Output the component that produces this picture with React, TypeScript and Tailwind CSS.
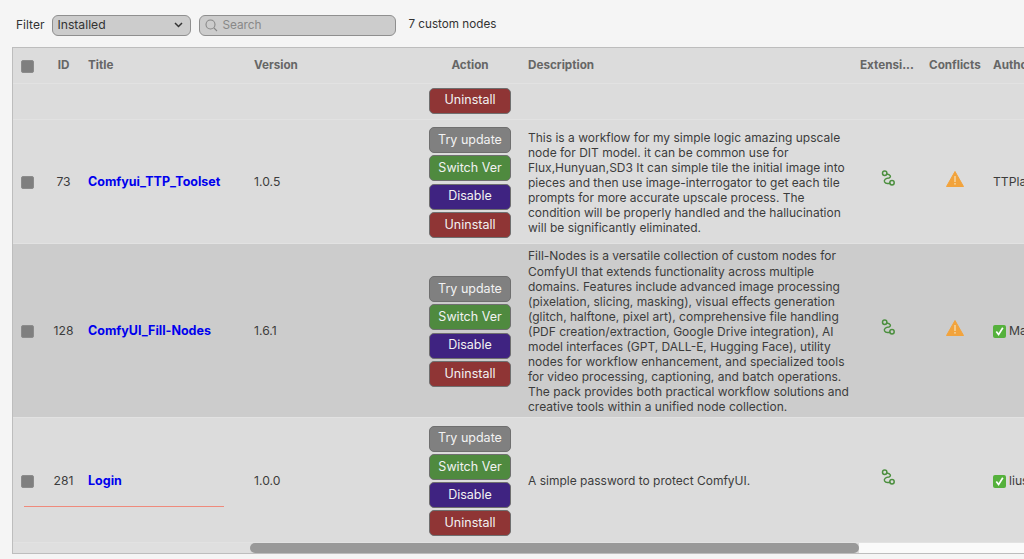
const FONT = "font-['Inter','Noto_Sans',sans-serif]";

function Btn({ label, cls }: { label: string; cls: string }) {
  return (
    <button className={`w-[82px] h-[26px] shrink-0 rounded-[5px] border border-[#6f6f6f] text-[12.5px] leading-none text-[#f2f2f2] ${cls}`}>
      {label}
    </button>
  );
}

function Actions({ only }: { only?: boolean }) {
  return (
    <div className="flex flex-col items-center gap-[2.33px]">
      {!only && <Btn label="Try update" cls="bg-[#808080]" />}
      {!only && <Btn label="Switch Ver" cls="bg-[#4f8a3f]" />}
      {!only && <Btn label="Disable" cls="bg-[#3f2381]" />}
      <Btn label="Uninstall" cls="bg-[#8f3535]" />
    </div>
  );
}

function Check() {
  return <div className="w-[13px] h-[13px] rounded-[2px] bg-[#7f7f7f] border border-[#8c8c8c]" />;
}

function Ext() {
  return (
    <svg className="mb-[8px]" width="15" height="17" viewBox="0 0 15 17" fill="none" stroke="#4c8f3f" strokeWidth="1.5" strokeLinecap="round">
      <circle cx="3.7" cy="3.2" r="2.2" />
      <circle cx="11" cy="12.8" r="2.2" />
      <path d="M5.8 4C9.4 4.4 10.6 7 8 8 4.8 8.3 2.6 9.6 3.6 12c.8 1.7 3 1.8 5.2 1.2" />
    </svg>
  );
}

function Warn() {
  return (
    <svg className="mb-[8px]" width="18" height="16" viewBox="0 0 18 16">
      <path d="M9 .5 17.5 15.5H.5Z" fill="#f2a33c" stroke="#f2a33c" strokeLinejoin="round" />
      <rect x="8.3" y="5" width="1.4" height="6" fill="#f6d9a8" />
      <rect x="8.3" y="12" width="1.4" height="1.6" fill="#f6d9a8" />
    </svg>
  );
}

function Tick() {
  return (
    <span className="inline-flex w-[13px] h-[13px] rounded-[2px] bg-[#55b13c] items-center justify-center mr-[3px] align-[-2px]">
      <svg width="11" height="11" viewBox="0 0 11 11" fill="none" stroke="#ffffff" strokeWidth="1.7"><path d="M2.3 5.6 4.6 8.6 8.8 1.8" /></svg>
    </span>
  );
}

function Row({ h, bg, id, title, version, desc, warn, author, tick }: {
  h: string; bg: string; id: string; title: string; version: string; desc: string; warn?: boolean; author: string; tick?: boolean;
}) {
  return (
    <div className={`flex items-center shrink-0 border-b border-[#e2e2e2] pt-[2px] ${h} ${bg}`}>
      <div className="w-[28px] shrink-0 flex justify-center"><Check /></div>
      <div className="w-[47px] shrink-0 pr-[2px] text-center text-[12.2px] text-[#3c3c3c]">{id}</div>
      <div className="w-[166px] shrink-0 font-bold text-[12.5px] text-[#0000ee]">{title}</div>
      <div className="w-[165px] shrink-0 text-[12.2px] text-[#3c3c3c]">{version}</div>
      <div className="w-[102px] shrink-0 flex justify-center"><Actions /></div>
      <div className="w-[332px] shrink-0 pl-[7px] pr-[1px] text-[#3c3c3c] text-[12px] leading-[15.1px]">{desc}</div>
      <div className="w-[70px] shrink-0 flex justify-center"><Ext /></div>
      <div className="w-[64px] shrink-0 flex justify-center"><span className="flex">{warn && <Warn />}</span></div>
      <div className="w-[80px] shrink-0 pl-[6px] text-[12.2px] whitespace-nowrap text-[#3c3c3c]">{tick && <Tick />}{author}</div>
    </div>
  );
}

export default function App() {
  return (
    <div className={`w-[1024px] h-[559px] bg-[#f5f5f5] overflow-hidden flex flex-col text-[12.2px] ${FONT}`}>
      <div className="h-[47px] shrink-0 flex items-center pl-[16px] pt-[3px] text-[#333333]">
        <span className="mr-[8px] text-[12px]">Filter</span>
        <div className="w-[139px] h-[21px] rounded-[6px] border border-[#8f8f8f] bg-[#cccccc] flex items-center justify-between pl-[4px] pr-[7px] text-[#333333]">
          <span>Installed</span>
          <svg width="9" height="6" viewBox="0 0 9 6" fill="none" stroke="#333333" strokeWidth="1.5"><path d="M1 1l3.5 3.5L8 1" /></svg>
        </div>
        <div className="w-[197px] h-[21px] ml-[8px] rounded-[6px] border border-[#8f8f8f] bg-[#cccccc] flex items-center pl-[5px] text-[#888888]">
          <svg width="13" height="13" viewBox="0 0 13 13" fill="none" stroke="#888888" strokeWidth="1.1"><circle cx="5.5" cy="5.5" r="4.5" /><path d="M9 9l3 3" /></svg>
          <span className="ml-[4px] pt-[1px] text-[11.8px]">Search</span>
        </div>
        <span className="ml-[12px] text-[#333333] text-[11.7px]">7 custom nodes</span>
      </div>

      <div className="relative ml-[12px] w-[1040px] h-[507px] shrink-0 border-t border-l border-b border-[#bdbdbd] bg-[#dcdcdc] flex flex-col">
        <div className="flex items-center h-[36px] shrink-0 pt-[1px] border-b border-[#e2e2e2] font-bold text-[#666666] text-[11.7px]">
          <div className="w-[28px] shrink-0 flex justify-center"><Check /></div>
          <div className="w-[47px] shrink-0 pr-[2px] text-center">ID</div>
          <div className="w-[166px] shrink-0">Title</div>
          <div className="w-[165px] shrink-0">Version</div>
          <div className="w-[102px] shrink-0 text-center">Action</div>
          <div className="w-[332px] shrink-0 pl-[7px]">Description</div>
          <div className="w-[70px] shrink-0 pl-[7px]">Extensi...</div>
          <div className="w-[64px] shrink-0 pl-[6px]">Conflicts</div>
          <div className="w-[80px] shrink-0 pl-[6px]">Author</div>
        </div>
        <div className="h-[36px] shrink-0 border-b border-[#e2e2e2] flex items-center pb-[2px]">
          <div className="w-[406px] shrink-0" />
          <div className="w-[102px] shrink-0 flex justify-center"><Actions only /></div>
        </div>
        <Row h="h-[124px]" bg="bg-[#dcdcdc]" id="73" title="Comfyui_TTP_Toolset" version="1.0.5"
          desc="This is a workflow for my simple logic amazing upscale node for DIT model. it can be common use for Flux,Hunyuan,SD3 It can simple tile the initial image into pieces and then use image-interrogator to get each tile prompts for more accurate upscale process. The condition will be properly handled and the hallucination will be significantly eliminated."
          warn author="TTPlanet" />
        <Row h="h-[174px]" bg="bg-[#cccccc]" id="128" title="ComfyUI_Fill-Nodes" version="1.6.1"
          desc="Fill-Nodes is a versatile collection of custom nodes for ComfyUI that extends functionality across multiple domains. Features include advanced image processing (pixelation, slicing, masking), visual effects generation (glitch, halftone, pixel art), comprehensive file handling (PDF creation/extraction, Google Drive integration), AI model interfaces (GPT, DALL-E, Hugging Face), utility nodes for workflow enhancement, and specialized tools for video processing, captioning, and batch operations. The pack provides both practical workflow solutions and creative tools within a unified node collection."
          warn author="Max" tick />
        <Row h="h-[125px]" bg="bg-[#dcdcdc]" id="281" title="Login" version="1.0.0"
          desc="A simple password to protect ComfyUI." author="liusida" tick />
        <div className="absolute left-[11px] top-[458px] w-[200px] h-px bg-[#ef8a7c]" />
        <div className="flex-1 flex">
          <div className="w-[237px] bg-[#dfdfdf]" />
          <div className="w-[609px] bg-[#999999] rounded-[5px]" />
          <div className="flex-1 bg-[#fafafa]" />
        </div>
      </div>
    </div>
  );
}
